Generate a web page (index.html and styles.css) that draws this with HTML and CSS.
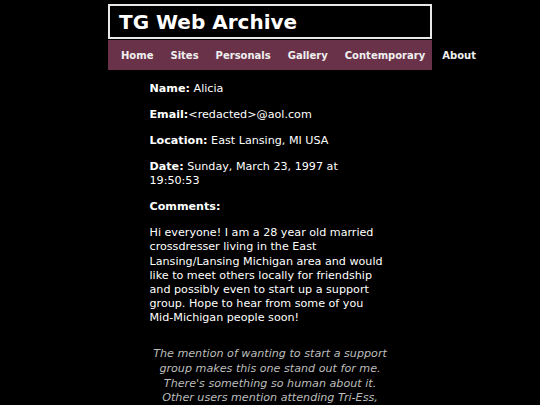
FILE: index.html
```html
<!DOCTYPE html>
<html>
<head>
<meta charset="utf-8">
<link rel="stylesheet" href="styles.css">
</head>
<body>
<div class="page">
  <header class="masthead">
    <h1 class="title">TG Web Archive</h1>
  </header>
  <nav class="nav">
    <a class="nav-link" href="#">Home</a>
    <a class="nav-link" href="#">Sites</a>
    <a class="nav-link" href="#">Personals</a>
    <a class="nav-link" href="#">Gallery</a>
    <a class="nav-link" href="#">Contemporary</a>
    <a class="nav-link" href="#">About</a>
  </nav>
  <main class="content">
    <p class="field"><b>Name:</b> Alicia</p>
    <p class="field"><b>Email:</b>&lt;redacted&gt;@aol.com</p>
    <p class="field"><b>Location:</b> East Lansing, MI USA</p>
    <p class="field"><b>Date:</b> Sunday, March 23, 1997 at 19:50:53</p>
    <p class="field"><b>Comments:</b></p>
    <p class="field">Hi everyone! I am a 28 year old married crossdresser living in the East Lansing/Lansing Michigan area and would like to meet others locally for friendship and possibly even to start up a support group. Hope to hear from some of you Mid-Michigan people soon!</p>
    <p class="note">The mention of wanting to start a support group makes this one stand out for me. There's something so human about it. Other users mention attending Tri-Ess, and I wonder if she ever got the group off the ground.</p>
  </main>
</div>
</body>
</html>
```
FILE: styles.css
```css
html, body {
  margin: 0;
  padding: 0;
  background: #000;
}
body {
  color: #fff;
  font-family: "DejaVu Sans", Verdana, sans-serif;
  font-size: 11.15px;
}
.page {
  width: 324px;
  margin: 0 auto;
  padding-top: 4px;
}
.masthead {
  border: 2px solid #e8e8e8;
  height: 31px;
  box-sizing: content-box;
  display: flex;
  align-items: center;
  padding-left: 9px;
}
.title {
  margin: 0;
  font-size: 20px;
  font-weight: bold;
  color: #fff;
}
.nav {
  margin-top: 1px;
  height: 30px;
  background: #6a3249;
  display: flex;
  align-items: center;
  gap: 17px;
  padding-left: 13px;
  white-space: nowrap;
}
.nav-link {
  color: #f0f0f0;
  font-size: 10px;
  font-weight: bold;
  text-decoration: none;
}
.content {
  width: 241px;
  margin: 0 auto;
  line-height: 14.2px;
}
.field {
  margin: 11.8px 0;
}
.field:first-child {
  margin-top: 12px;
}
.note {
  margin: 21.5px 0 0;
  padding: 0 2px;
  text-align: center;
  font-style: italic;
  color: #bdbdbd;
  line-height: 14.7px;
}
```
